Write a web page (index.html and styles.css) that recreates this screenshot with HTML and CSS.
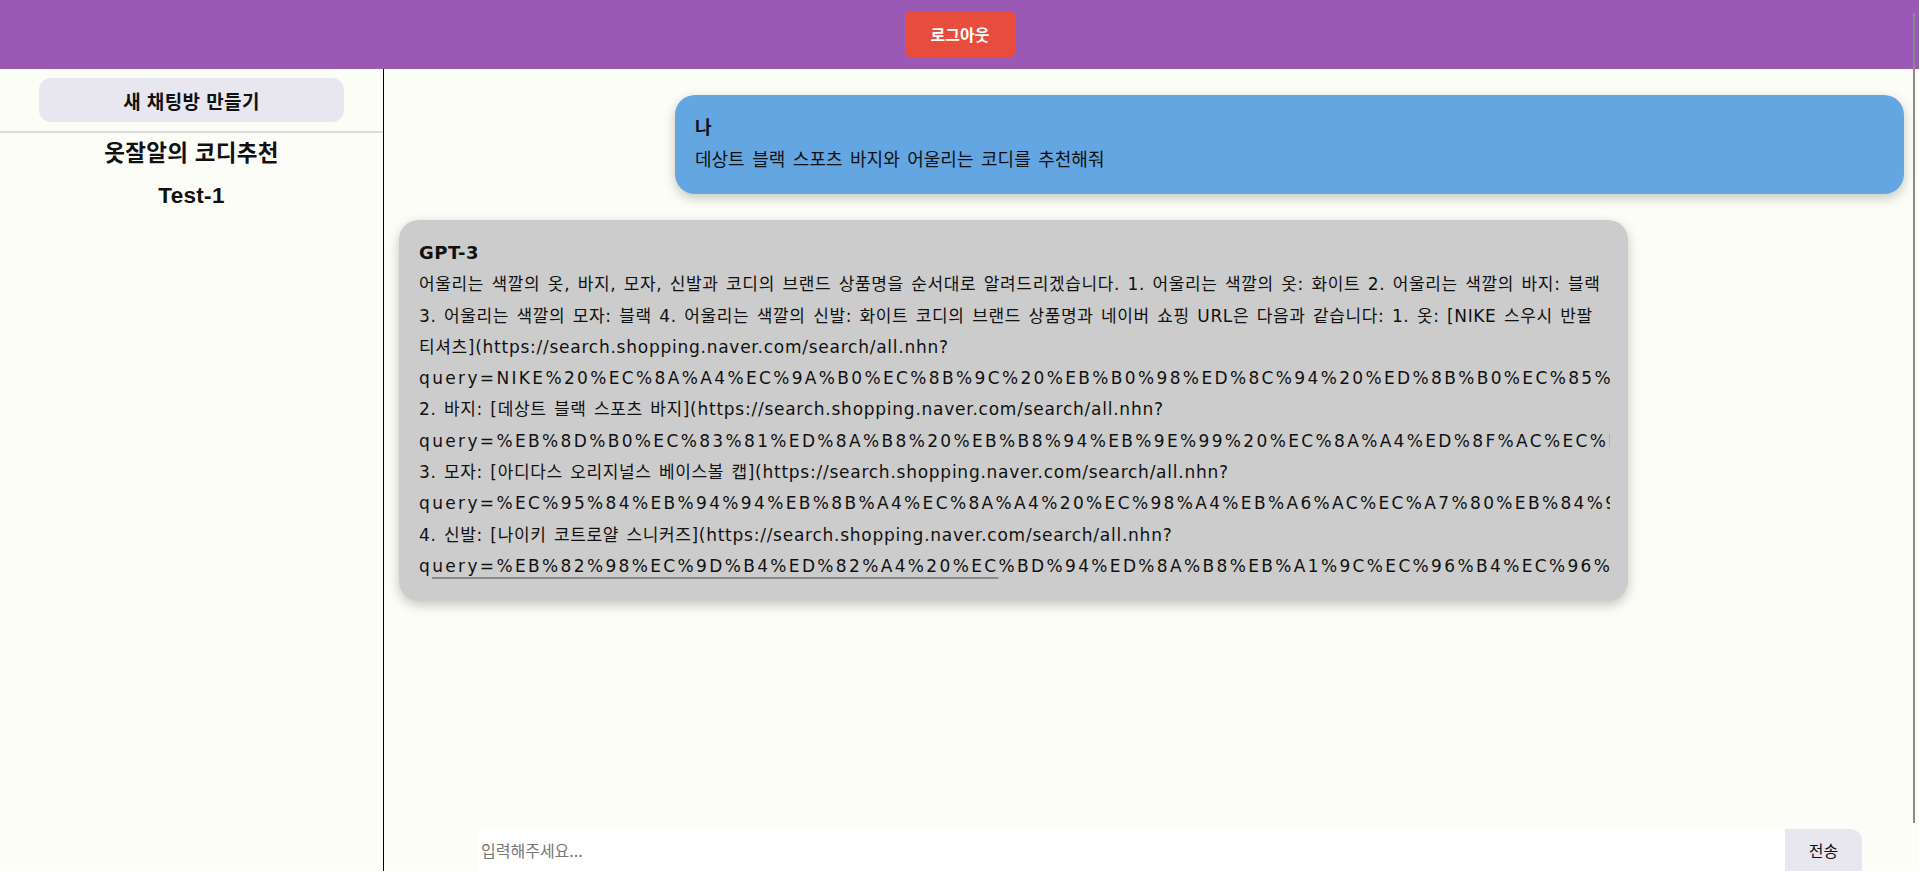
FILE: index.html
```html
<!DOCTYPE html>
<html lang="ko">
<head>
<meta charset="utf-8">
<title>옷잘알의 코디추천</title>
<link rel="stylesheet" href="styles.css">
</head>
<body>
<header class="topbar">
  <button class="logout">로그아웃</button>
</header>
<div class="layout">
  <aside class="sidebar">
    <div class="new-wrap"><button class="new-room">새 채팅방 만들기</button></div>
    <ul class="rooms">
      <li class="room">옷잘알의 코디추천</li>
      <li class="room">Test-1</li>
    </ul>
  </aside>
  <main class="chat">
    <div class="messages">
      <div class="bubble user">
        <div class="name">나</div>
        <div class="text">데상트 블랙 스포츠 바지와 어울리는 코디를 추천해줘</div>
      </div>
      <div class="bubble bot">
        <div class="name">GPT-3</div>
        <div class="text lines">어울리는 색깔의 옷, 바지, 모자, 신발과 코디의 브랜드 상품명을 순서대로 알려드리겠습니다. 1. 어울리는 색깔의 옷: 화이트 2. 어울리는 색깔의 바지: 블랙<br>3. 어울리는 색깔의 모자: 블랙 4. 어울리는 색깔의 신발: 화이트 코디의 브랜드 상품명과 네이버 쇼핑 URL은 다음과 같습니다: 1. 옷: [NIKE 스우시 반팔<br>티셔츠<span class="url">](https://search.shopping.naver.com/search/all.nhn?</span><br><span class="query">query=NIKE%20%EC%8A%A4%EC%9A%B0%EC%8B%9C%20%EB%B0%98%ED%8C%94%20%ED%8B%B0%EC%85%94%EC%B8%A0)</span><br>2. 바지: [데상트 블랙 스포츠 바지]<span class="url">(https://search.shopping.naver.com/search/all.nhn?</span><br><span class="query">query=%EB%8D%B0%EC%83%81%ED%8A%B8%20%EB%B8%94%EB%9E%99%20%EC%8A%A4%ED%8F%AC%EC%B8%A0%20%EB%B0%94%EC%A7%80)</span><br>3. 모자: [아디다스 오리지널스 베이스볼 캡]<span class="url">(https://search.shopping.naver.com/search/all.nhn?</span><br><span class="query">query=%EC%95%84%EB%94%94%EB%8B%A4%EC%8A%A4%20%EC%98%A4%EB%A6%AC%EC%A7%80%EB%84%90%EC%8A%A4)</span><br>4. 신발: [나이키 코트로얄 스니커즈]<span class="url">(https://search.shopping.naver.com/search/all.nhn?</span><br><span class="query">q<span class="mark">uery=%EB%82%98%EC%9D%B4%ED%82%A4%20%EC</span>%BD%94%ED%8A%B8%EB%A1%9C%EC%96%B4%EC%96%84%20%EC%8A%A4%EB%8B%88%EC%BB%A4%EC%A6%88)</span></div>
      </div>
    </div>
    <form class="composer">
      <input class="field" type="text" placeholder="입력해주세요...">
      <button class="send" type="button">전송</button>
    </form>
  </main>
</div>
<div class="scroll-thumb"></div>
</body>
</html>
```
FILE: styles.css
```css
* { box-sizing: border-box; }
html, body { margin: 0; height: 100%; }
body {
  background: #fdfdf7;
  font-family: "DejaVu Sans", "Noto Sans CJK KR", sans-serif;
  color: #111;
  overflow: hidden;
  display: flex;
  flex-direction: column;
}
.topbar {
  height: 69px;
  flex: none;
  background: #9b59b6;
  display: flex;
  justify-content: center;
  align-items: flex-start;
  padding-top: 11px;
}
.logout {
  width: 110px;
  height: 46px;
  border: none;
  border-radius: 5px;
  background: #e74c3c;
  color: #fff;
  font-family: "Noto Sans CJK KR", sans-serif;
  font-weight: 700;
  font-size: 16px;
  margin-left: 1px;
}
.layout {
  flex: 1;
  display: flex;
  min-height: 0;
}
.sidebar {
  width: 384px;
  flex: none;
  border-right: 1px solid #000;
}
.new-wrap {
  padding: 9px 0 9px;
  border-bottom: 2px solid #dcdcdc;
  display: flex;
  justify-content: center;
}
.new-room {
  width: 305px;
  height: 44px;
  border: none;
  border-radius: 12px;
  background: #e8e7ef;
  font-family: "Noto Sans CJK KR", sans-serif;
  font-size: 19px;
  letter-spacing: 0.4px;
  font-weight: 700;
  color: #111;
}
.rooms {
  list-style: none;
  margin: 0;
  padding: 0;
}
.room {
  text-align: center;
  font-family: "Liberation Sans", "Noto Sans CJK KR", sans-serif;
  font-size: 22.5px;
  font-weight: 700;
  line-height: 42px;
  height: 42px;
  letter-spacing: 0.3px;
  color: #111;
}
.chat {
  flex: 1;
  display: flex;
  flex-direction: column;
  min-width: 0;
}
.messages {
  flex: 1;
  display: flex;
  flex-direction: column;
  gap: 26px;
  padding: 26px 15px 0;
}
.bubble {
  width: 1229px;
  border-radius: 20px;
  padding: 20px 18px 19px 20px;
  box-shadow: 0 4px 12px rgba(0, 0, 0, 0.22);
}
.user {
  background: #64a6e2;
  align-self: flex-end;
}
.bot {
  background: #cccccc;
  align-self: flex-start;
}
.name {
  font-size: 18px;
  font-weight: 700;
  line-height: 26px;
  margin-bottom: 3px;
  letter-spacing: 0.5px;
}
.text {
  line-height: 31.3px;
  font-size: 17px;
  letter-spacing: 0.62px;
  word-spacing: 1.5px;
}
.user .text {
  font-size: 18px;
  letter-spacing: 0;
  word-spacing: 1.8px;
}
.lines {
  white-space: nowrap;
  overflow: hidden;
}
.url {
  letter-spacing: 0.75px;
}
.query {
  letter-spacing: 2.35px;
}
.mark {
  text-decoration: underline;
  text-decoration-color: #8a8a8a;
  text-decoration-thickness: 2px;
  text-underline-offset: 5px;
}
.composer {
  flex: none;
  height: 42px;
  display: flex;
  padding: 0 57px 0 94px;
  margin: 0;
}
.field {
  flex: 1;
  border: none;
  outline: none;
  background: #fff;
  padding: 0 3px;
  font-family: "Noto Sans CJK KR", sans-serif;
  font-size: 16px;
  color: #333;
}
.field::placeholder { color: #767676; }
.send {
  width: 77px;
  border: none;
  background: #e8e7ef;
  border-radius: 0 12px 0 0;
  font-family: "Noto Sans CJK KR", sans-serif;
  font-size: 16px;
  color: #111;
}
.scroll-thumb {
  position: absolute;
  left: 1913px;
  top: 13px;
  width: 2px;
  height: 810px;
  background: #8a8a8a;
}
```
